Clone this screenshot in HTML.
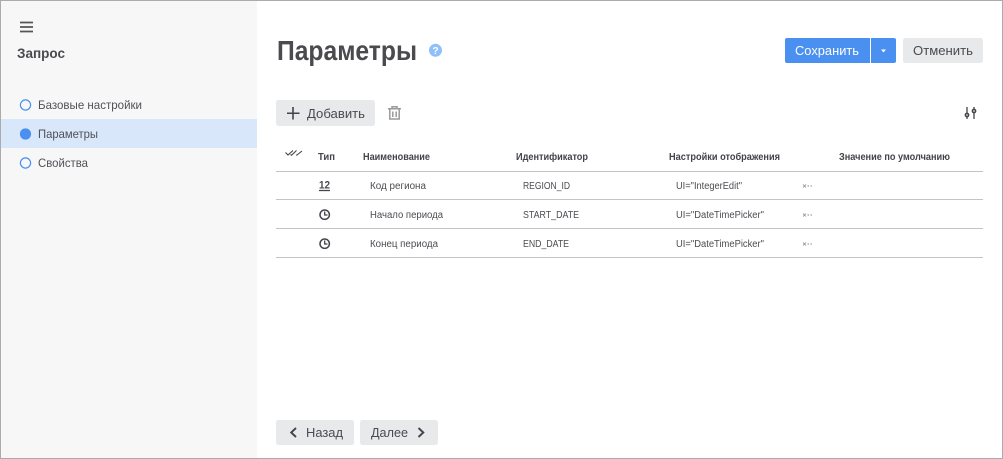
<!DOCTYPE html>
<html lang="ru"><head><meta charset="utf-8"><title>Параметры</title>
<style>
html,body{margin:0;padding:0;background:#fff;overflow:hidden}
svg{display:block}
text{font-family:"Liberation Sans",sans-serif;fill:#4a4a4f}
.h{font-size:10px;font-weight:bold;fill:#44444a}
.r{font-size:10px;fill:#4c4c52}
.n{font-size:12px;fill:#505057}
.b{font-size:13px;fill:#4a4a50}
</style></head><body>
<svg width="1003" height="459" viewBox="0 0 1003 459" xmlns="http://www.w3.org/2000/svg">
<rect width="1003" height="459" fill="#fff"/>
<rect x="1" y="1" width="256" height="457" fill="#f7f7f7"/>
<rect x="1" y="119" width="256" height="29" fill="#d8e7fa"/>
<rect x=".5" y=".5" width="1002" height="458" fill="none" stroke="#ababab"/>

<path d="M20 22.500h13M20 27h13M20 31.500h13" stroke="#555" stroke-width="1.800" fill="none"/>
<text x="17" y="58" font-size="14" font-weight="bold" textLength="48" lengthAdjust="spacingAndGlyphs" fill="#444">Запрос</text>
<circle cx="25.500" cy="105" r="5.100" fill="none" stroke="#4a90f0" stroke-width="1.200"/>
<circle cx="25.500" cy="134" r="5.600" fill="#4a90f0"/>
<circle cx="25.500" cy="163" r="5.100" fill="none" stroke="#4a90f0" stroke-width="1.200"/>
<text class="n" x="38" y="109" textLength="104" lengthAdjust="spacingAndGlyphs">Базовые настройки</text>
<text class="n" x="38" y="138" textLength="60" lengthAdjust="spacingAndGlyphs">Параметры</text>
<text class="n" x="38" y="167" textLength="50" lengthAdjust="spacingAndGlyphs">Свойства</text>

<text x="277" y="60" font-size="27.500" font-weight="bold" textLength="140" lengthAdjust="spacingAndGlyphs" fill="#46464c">Параметры</text>
<circle cx="435.500" cy="50.300" r="6.500" fill="#90c0fa"/>
<text x="435.500" y="53.800" font-size="10" font-weight="bold" text-anchor="middle" style="fill:#fff">?</text>

<path d="M787 38h83v25h-83a2 2 0 0 1-2-2v-21a2 2 0 0 1 2-2z" fill="#4a90f0"/>
<path d="M871 38h23a2 2 0 0 1 2 2v21a2 2 0 0 1-2 2h-23z" fill="#4a90f0"/>
<text x="795" y="55" font-size="13" textLength="64" lengthAdjust="spacingAndGlyphs" style="fill:#fff">Сохранить</text>
<path d="M881 49.500h5l-2.500 3z" fill="#fff"/>
<rect x="903" y="38" width="80" height="25" rx="2.500" fill="#e8e9eb"/>
<text class="b" x="913" y="55" textLength="60" lengthAdjust="spacingAndGlyphs">Отменить</text>

<rect x="276" y="100" width="99" height="26" rx="2.500" fill="#e8e9eb"/>
<path d="M293 107v12.500M287 113.250h12.500" stroke="#44444a" stroke-width="1.600" fill="none"/>
<text class="b" x="307" y="118" textLength="58" lengthAdjust="spacingAndGlyphs">Добавить</text>
<path d="M388 108.800h13M392 108v-1.300h5v1.300M389.800 109v10h9.400v-10M392.800 111.500v5.500M396.200 111.500v5.500" stroke="#9a9a9a" stroke-width="1.500" fill="none"/>
<path d="M967 107v12M974 107v12" stroke="#44444a" stroke-width="1.300"/>
<circle cx="967" cy="115" r="1.700" fill="#bbb" stroke="#44444a" stroke-width="1.400"/>
<circle cx="974" cy="111" r="1.700" fill="#bbb" stroke="#44444a" stroke-width="1.400"/>

<path d="M285.500 152.500l2.500 2.500 5-4.500M290.500 154.500l1 .8 5-4.800M296 155l1 0 5-4" stroke="#44444a" stroke-width="1.100" fill="none"/>
<text class="h" x="318" y="160" textLength="17" lengthAdjust="spacingAndGlyphs">Тип</text>
<text class="h" x="363" y="160" textLength="67" lengthAdjust="spacingAndGlyphs">Наименование</text>
<text class="h" x="516" y="160" textLength="72" lengthAdjust="spacingAndGlyphs">Идентификатор</text>
<text class="h" x="669" y="160" textLength="111" lengthAdjust="spacingAndGlyphs">Настройки отображения</text>
<text class="h" x="839" y="160" textLength="111" lengthAdjust="spacingAndGlyphs">Значение по умолчанию</text>

<path d="M276 171.500h707M276 199.500h707M276 228.500h707M276 257.500h707" stroke="#c4c4c4" fill="none"/>

<text x="319" y="188.500" font-size="11" font-weight="bold" textLength="11" lengthAdjust="spacingAndGlyphs" fill="#44444a">12</text>
<path d="M319 190.500h11" stroke="#44444a" stroke-width="1.300"/>
<g fill="none" stroke="#44444a" stroke-width="1.500">
<circle cx="324.700" cy="214.700" r="4.700"/><path d="M324.700 211.500v3.500h2.800" stroke-width="1.300"/>
<circle cx="324.700" cy="243.700" r="4.700"/><path d="M324.700 240.500v3.500h2.800" stroke-width="1.300"/>
</g>

<text class="r" x="370" y="189" textLength="56" lengthAdjust="spacingAndGlyphs">Код региона</text>
<text class="r" x="370" y="218" textLength="73" lengthAdjust="spacingAndGlyphs">Начало периода</text>
<text class="r" x="370" y="247" textLength="68" lengthAdjust="spacingAndGlyphs">Конец периода</text>
<text class="r" x="523" y="189" textLength="47" lengthAdjust="spacingAndGlyphs">REGION_ID</text>
<text class="r" x="523" y="218" textLength="56" lengthAdjust="spacingAndGlyphs">START_DATE</text>
<text class="r" x="523" y="247" textLength="46" lengthAdjust="spacingAndGlyphs">END_DATE</text>
<text class="r" x="676" y="189" textLength="66" lengthAdjust="spacingAndGlyphs">UI="IntegerEdit"</text>
<text class="r" x="676" y="218" textLength="88" lengthAdjust="spacingAndGlyphs">UI="DateTimePicker"</text>
<text class="r" x="676" y="247" textLength="88" lengthAdjust="spacingAndGlyphs">UI="DateTimePicker"</text>
<g fill="#8a8a8e">
<path d="M803 184.500l3 3M806 184.500l-3 3M803 213.500l3 3M806 213.500l-3 3M803 242.500l3 3M806 242.500l-3 3" stroke="#8a8a8e" stroke-width=".8" fill="none"/>
<rect x="807.500" y="185.500" width="1.500" height="1"/><rect x="810.500" y="185.500" width="1.500" height="1"/>
<rect x="807.500" y="214.500" width="1.500" height="1"/><rect x="810.500" y="214.500" width="1.500" height="1"/>
<rect x="807.500" y="243.500" width="1.500" height="1"/><rect x="810.500" y="243.500" width="1.500" height="1"/>
</g>

<rect x="276" y="420" width="78" height="25" rx="2.500" fill="#e8e9eb"/>
<rect x="360" y="420" width="78" height="25" rx="2.500" fill="#e8e9eb"/>
<path d="M296 428l-4.800 4.500 4.800 4.500" fill="none" stroke="#44444a" stroke-width="1.900"/>
<path d="M418.500 428l4.800 4.500-4.800 4.500" fill="none" stroke="#44444a" stroke-width="1.900"/>
<text class="b" x="306" y="437" textLength="37" lengthAdjust="spacingAndGlyphs">Назад</text>
<text class="b" x="371" y="437" textLength="37" lengthAdjust="spacingAndGlyphs">Далее</text>
</svg>
</body></html>
